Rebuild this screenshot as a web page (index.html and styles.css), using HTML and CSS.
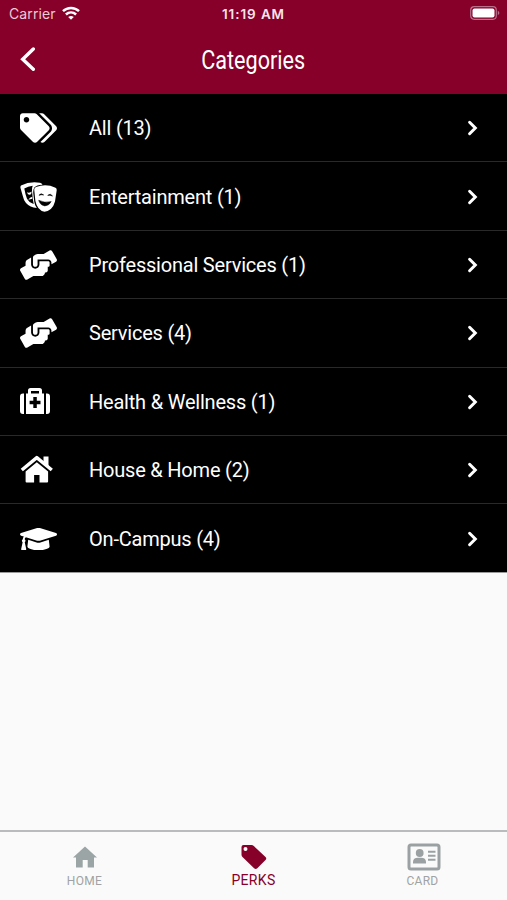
FILE: index.html
```html
<!DOCTYPE html>
<html lang="en">
<head>
<meta charset="utf-8">
<title>Categories</title>
<link rel="stylesheet" href="styles.css">
</head>
<body>
<svg class="defs" aria-hidden="true">
  <symbol id="next" viewBox="0 0 12 16"><path d="M2.600 2.300l5.700 5.700-5.700 5.700" fill="none" stroke="currentColor" stroke-width="3" stroke-linecap="round"/></symbol>
  <symbol id="hands" viewBox="0 0 640 512"><path d="M488 192H336v56c0 39.700-32.300 72-72 72s-72-32.300-72-72V126.400l-64.900 39C107.800 176.900 96 197.800 96 220.200v47.300l-80 46.200C.7 322.500-4.600 342.100 4.300 357.400l80 138.600c8.800 15.300 28.400 20.500 43.700 11.700L231.400 448H368c35.300 0 64-28.700 64-64h16c17.700 0 32-14.300 32-32v-64h8c13.300 0 24-10.700 24-24v-48c0-13.300-10.700-24-24-24zm147.700-37.400L555.700 16C546.900.7 527.300-4.500 512 4.300L408.600 64H306.400c-12 0-23.700 3.400-33.900 9.700L239 94.600c-9.400 5.800-15 16.100-15 27.100V248c0 22.100 17.900 40 40 40s40-17.900 40-40v-88h184c30.900 0 56 25.100 56 56v28.500l80-46.200c15.300-8.900 20.500-28.400 11.700-43.700z"/></symbol>
</svg>
<div class="app">
  <header class="header">
    <div class="status">
      <div class="carrier"><span class="carrier-name">Carrier</span>
        <svg class="wifi" viewBox="0 0 18 14" fill="none" stroke="#fff" stroke-width="2.500"><path d="M1 5.100c4.500-4.300 11.500-4.300 16 0"/><path d="M3.900 8.500c3-2.800 7.200-2.800 10.200 0"/><path d="M9 13.800l-2.800-2.900q2.800-2 5.600 0z" fill="#fff" stroke="none"/></svg>
      </div>
      <div class="time">11:19 AM</div>
      <svg class="battery" viewBox="0 0 30 14"><rect x=".7" y=".7" width="25.600" height="12.600" rx="3.500" fill="none" stroke="#b8708b" stroke-width="1.200"/><rect x="2.500" y="2.500" width="22" height="9" rx="2" fill="#fff"/><path d="M27.800 4.800q3.200 2.200 0 4.400z" fill="#b8708b"/></svg>
    </div>
    <div class="nav">
      <svg class="back" viewBox="0 0 16 26"><path d="M13.300 2L2.700 12.300l10.600 10" fill="none" stroke="#fff" stroke-width="3.400" stroke-linecap="round"/></svg>
      <h1 class="title">Categories</h1>
      <span></span>
    </div>
  </header>
  <main class="list">
    <div class="row"><svg class="icon" viewBox="0 0 640 512"><path d="M497.941 225.941L286.059 14.059A48 48 0 0 0 252.118 0H48C21.490 0 0 21.490 0 48v204.118a48 48 0 0 0 14.059 33.941l211.882 211.882c18.744 18.745 49.136 18.746 67.882 0l204.118-204.118c18.745-18.745 18.745-49.137 0-67.882zM112 160c-26.510 0-48-21.490-48-48s21.490-48 48-48 48 21.490 48 48-21.490 48-48 48zm513.941 133.823L421.823 497.941c-18.745 18.745-49.137 18.745-67.882 0l-.36-.36L527.640 323.522c16.999-16.999 26.360-39.600 26.360-63.640s-9.362-46.641-26.360-63.640L331.397 0h48.721a48 48 0 0 1 33.941 14.059l211.882 211.882c18.745 18.745 18.745 49.136 0 67.882z"/></svg><span class="label">All (13)</span><svg class="next"><use href="#next"/></svg></div>
    <div class="row"><svg class="icon" viewBox="0 0 37 30">
      <path d="M1 3.500Q10-1 20 .8Q22 1.100 22.500 2.700Q16.500 3 14.300 5.500Q13 7.500 13.300 11.500L14.300 20Q14.800 23.500 16.800 26Q10 25.500 6 21Q3.500 18 2.500 13L.5 6Q.2 4.200 1 3.500z"/>
      <path d="M4.300 6.500Q8 4.100 12.700 3.700Q11.700 6 12 9L12.900 17.500L13.700 22Q9 20.500 6.900 16.500Q5.200 12 4.300 6.500z" fill="#000"/>
      <path d="M7 10.300q2 1.200 4.500-.8q.3 3-1.800 3.300q-2 .1-2.700-2.500zM8.300 17.800q1.500-2.500 4-3.100v2q-1.900.6-4 1.100z"/>
      <path d="M16 5Q26 1.200 35.500 5.700Q37 6.500 36.700 8.200L35 19.500Q32.500 28.700 24.500 29.700Q17.300 28.500 15.400 19L14.200 7.800Q14.200 5.800 16 5z"/>
      <path d="M18.900 13.300q2-3 4.800-.3q-2.400-.6-4.800.3zM27.700 13.400q2.700-2.600 4.800.6q-2.300-1-4.800-.6zM18.700 18.300q6 3 12.500 1.300q-2.200 4.300-6.400 4.300q-4.700-.6-6.100-5.600z" fill="#000" stroke="#000" stroke-width=".5"/>
    </svg><span class="label">Entertainment (1)</span><svg class="next"><use href="#next"/></svg></div>
    <div class="row"><svg class="icon"><use href="#hands"/></svg><span class="label">Professional Services (1)</span><svg class="next"><use href="#next"/></svg></div>
    <div class="row"><svg class="icon"><use href="#hands"/></svg><span class="label">Services (4)</span><svg class="next"><use href="#next"/></svg></div>
    <div class="row"><svg class="icon" viewBox="0 0 37 30"><path fill-rule="evenodd" d="M3 6.500h1V27H3q-3 0-3-3V9.500q0-3 3-3zM26 6.500h1q3 0 3 3V24q0 3-3 3h-1zM6 6.500h2V3.500Q8 1 10.500 1h9Q22 1 22 3.500v3h2V27H6zM11 4v2.500h8V4zM13.300 10v3.700H9.600v3.600h3.700V21h3.500v-3.700h3.700v-3.600h-3.700V10z"/></svg><span class="label">Health &amp; Wellness (1)</span><svg class="next"><use href="#next"/></svg></div>
    <div class="row"><svg class="icon" viewBox="0 0 37 30"><path d="M1.800 15L16.800 2.600l15 12.400" fill="none" stroke="#fff" stroke-width="3.400" stroke-linejoin="round"/><path d="M23.500 1.500h5v10l-5-4.200zM16.800 7.200l11.300 9.200V26.500q0 1-1 1h-7.600V20h-5.400v7.500H6.600q-1 0-1-1V16.400z"/></svg><span class="label">House &amp; Home (2)</span><svg class="next"><use href="#next"/></svg></div>
    <div class="row"><svg class="icon" viewBox="0 0 640 512"><path d="M622.340 153.200L343.400 67.500c-15.200-4.670-31.600-4.670-46.790 0L17.660 153.200c-23.540 7.230-23.540 38.360 0 45.590l48.630 14.940c-10.670 13.190-17.230 29.280-17.880 46.900C38.780 266.150 32 276.110 32 288c0 10.780 5.680 19.850 13.860 25.650L20.330 428.530C18.110 438.520 25.710 448 35.940 448h56.110c10.240 0 17.840-9.480 15.620-19.470L82.140 313.650C90.320 307.850 96 298.780 96 288c0-11.570-6.470-21.250-15.660-26.870.76-15.020 8.440-28.300 20.690-36.720L296.600 284.500c9.060 2.780 26.440 6.250 46.790 0l278.950-85.700c23.550-7.240 23.550-38.360 0-45.600zM352.790 315.090c-28.530 8.760-52.840 3.920-65.590 0l-145.020-44.550L128 384c0 35.350 85.960 64 192 64s192-28.650 192-64l-14.180-113.470-145.030 44.560z"/></svg><span class="label">On-Campus (4)</span><svg class="next"><use href="#next"/></svg></div>
  </main>
  <nav class="tabs">
    <div class="tab"><svg class="tab-icon" viewBox="0 0 34 28"><path d="M17 3.500L29 14.500H26V24.500h-6.300v-7.500h-5v7.500H8v-10H5z" fill="#9ba5a5"/></svg><span class="tab-label">HOME</span></div>
    <div class="tab active"><svg class="tab-icon" viewBox="0 0 34 28"><path fill-rule="evenodd" d="M6.500 2h8q1.300 0 2.300 1L28.500 14q1.500 1.500 0 3l-8.200 8.300q-1.600 1.500-3.200 0L5.500 14q-1-1-1-2.200V4q0-2 2-2zM8.500 4a2 2 0 1 0 0 4a2 2 0 1 0 0-4z" fill="#860029"/></svg><span class="tab-label">PERKS</span></div>
    <div class="tab"><svg class="tab-icon card-icon" viewBox="0 0 34 28"><rect x="2" y="2" width="30" height="24" rx="2" fill="none" stroke="#9ba1a2" stroke-width="3"/><circle cx="12.700" cy="10" r="3.900" fill="#9ba1a2"/><path d="M6 20.500v-1.500q0-4.300 5-4.300h3q5 0 5 4.300v1.500zM21 7.800h7.500v2H21zM21 11.800h7.500v2H21zM21 15.800h7.500v2H21z" fill="#9ba1a2"/></svg><span class="tab-label">CARD</span></div>
  </nav>
</div>
</body>
</html>
```
FILE: styles.css
```css
* { box-sizing: border-box; }
body { margin: 0; background: #fafafa; font-family: Roboto, sans-serif; }
.defs { display: none; }
.app { height: 900px; display: flex; flex-direction: column; }
.header { height: 94px; background: #860029; color: #fff; }
.status { height: 27px; display: grid; grid-template-columns: 1fr auto 1fr; align-items: center; padding: 0 7px 0 9px; font-family: Inter, sans-serif; }
.carrier { display: flex; align-items: center; gap: 6px; font-size: 14px; color: #e9cbd5; }
.carrier-name { letter-spacing: 0.1px; }
.wifi { width: 18px; height: 14px; margin-top: -1px; }
.time { margin-left: -2px; font-size: 13.5px; font-weight: 600; letter-spacing: 0.9px; color: #f6e6eb; }
.battery { width: 30px; height: 14px; margin-top: -1px; justify-self: end; }
.nav { height: 67px; display: grid; grid-template-columns: 1fr auto 1fr; align-items: center; padding: 0 20px; }
.back { width: 16px; height: 26px; margin-top: -1px; }
.title { margin: 0 -10px; font-size: 25px; font-weight: 400; line-height: 28px; transform: scaleX(0.864); }
.list { height: 479px; display: grid; grid-template-rows: repeat(7, 68.4px); background: #000; color: #fff; border-bottom: 1px solid #999; }
.row { display: grid; grid-template-columns: 69px 1fr 12px; align-items: center; padding: 1px 28px 0 20px; border-bottom: 1px solid #292929; }
.row:last-child { border-bottom: 0; }
.icon { width: 37px; height: 30px; fill: #fff; }
.label { font-size: 20px; line-height: 24px; letter-spacing: -0.21px; white-space: nowrap; }
.next { width: 12px; height: 16px; }
.tabs { margin-top: auto; height: 70px; display: grid; grid-template-columns: repeat(3, 1fr); border-top: 2px solid #b9bcbc; }
.tab { display: flex; flex-direction: column; align-items: center; padding-top: 11px; color: #a0a3a4; }
.tab-icon { width: 34px; height: 28px; }
.card-icon { margin-left: 3px; }
.tab-label { margin-top: 2px; font-size: 12px; line-height: 16px; letter-spacing: 0.3px; }
.active { color: #860029; }
.active .tab-label { font-size: 14px; margin-top: 1px; }
```
